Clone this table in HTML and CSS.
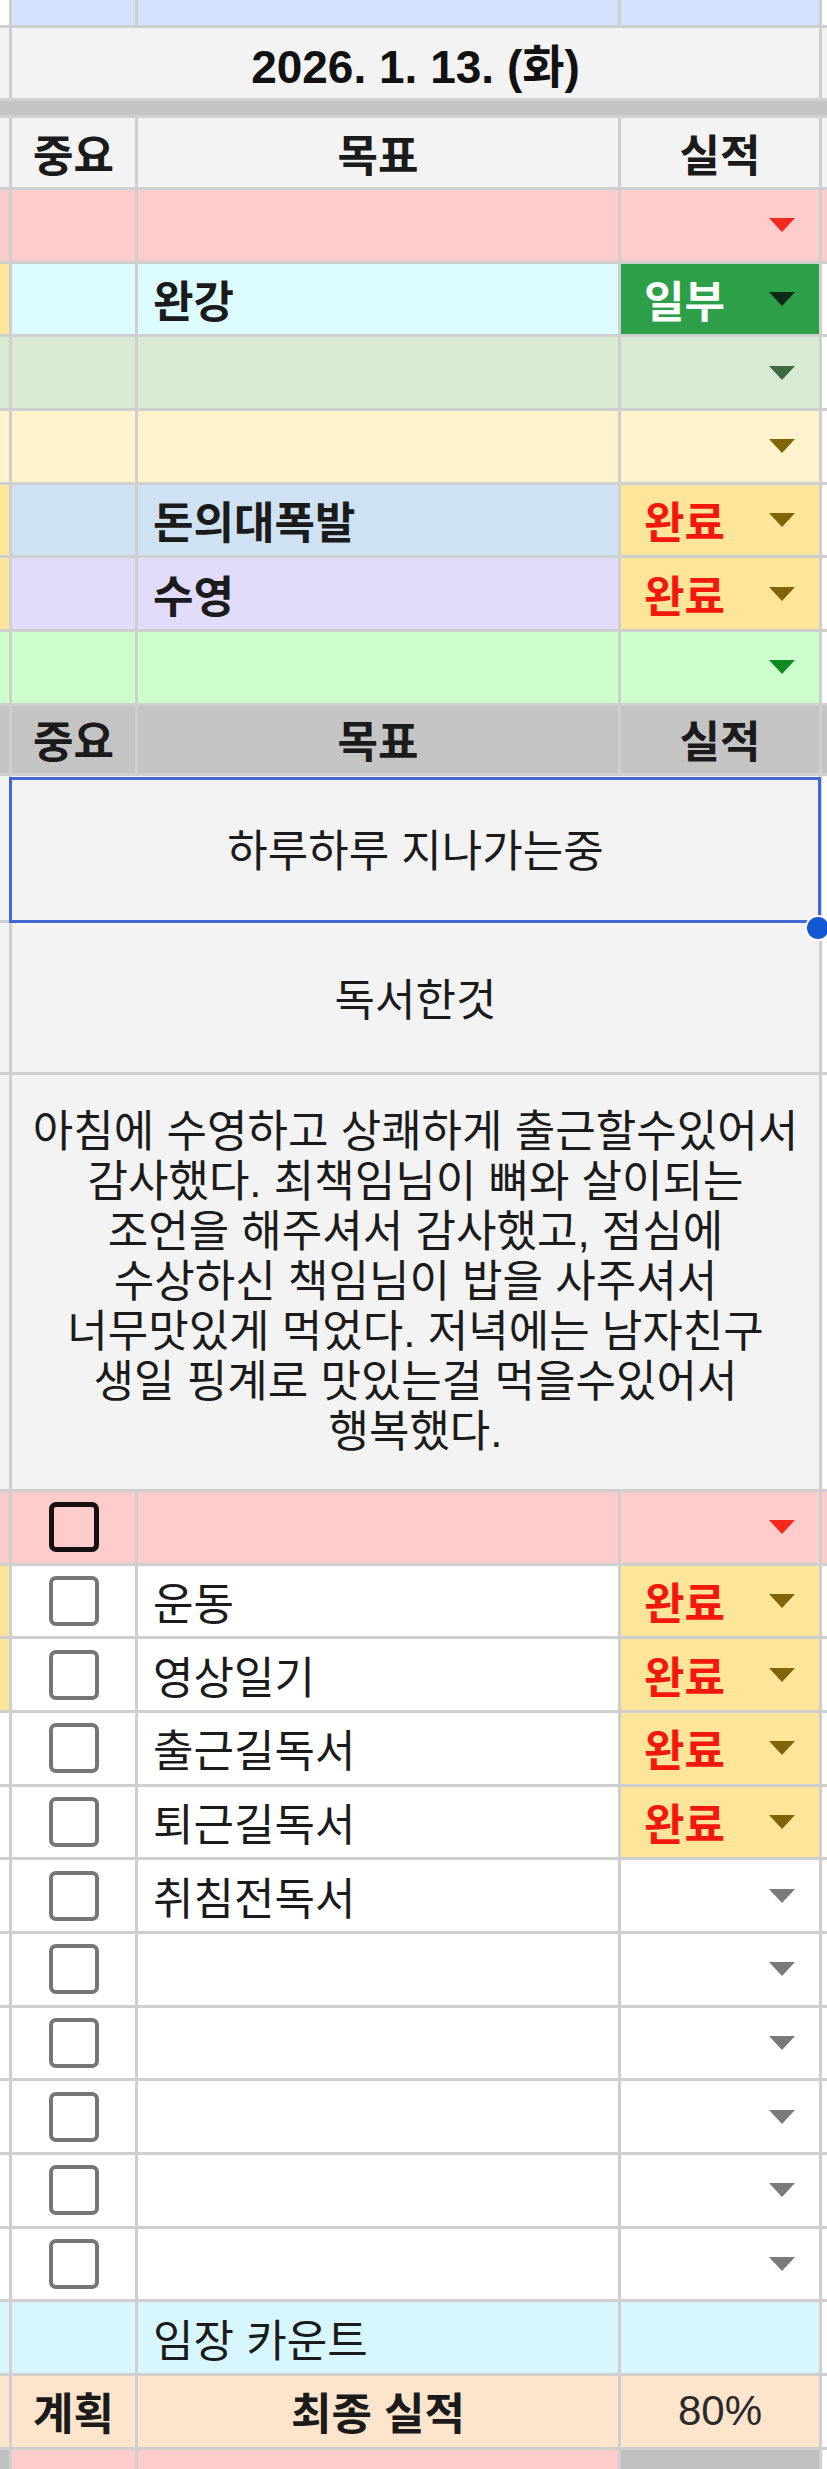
FILE: index.html
```html
<!DOCTYPE html>
<html lang="ko">
<head>
    <meta charset="UTF-8">
    <meta name="viewport" content="width=device-width, initial-scale=1.0">
    <title>2026. 1. 13. (화)</title>
    <link rel="stylesheet" href="styles.css">
</head>
<body>
<div class="sheet">

    <!-- previous day, cut off -->
    <div class="row row-top">
        <div class="edge"></div>
        <div></div>
        <div></div>
        <div></div>
        <div class="edge"></div>
    </div>

    <div class="row row-date">
        <div class="edge"></div>
        <div class="span date">2026. 1. 13. (화)</div>
        <div class="edge"></div>
    </div>

    <div class="row row-bar"><div class="full"></div></div>

    <div class="row row-head light">
        <div class="edge"></div>
        <div class="center bold">중요</div>
        <div class="center bold">목표</div>
        <div class="center bold">실적</div>
        <div class="edge"></div>
    </div>

    <!-- goals -->
    <div class="row pink">
        <div class="edge"></div>
        <div></div>
        <div class="name"></div>
        <div class="pick tri-red"><span></span><svg class="tri" viewBox="0 0 26 14"><path d="M0 0h26L13 14z"/></svg></div>
        <div class="edge"></div>
    </div>
    <div class="row cyan">
        <div class="edge gold"></div>
        <div></div>
        <div class="name bold">완강</div>
        <div class="pick green tri-dark"><span>일부</span><svg class="tri" viewBox="0 0 26 14"><path d="M0 0h26L13 14z"/></svg></div>
        <div class="edge white"></div>
    </div>
    <div class="row sage">
        <div class="edge"></div>
        <div></div>
        <div class="name"></div>
        <div class="pick tri-sage"><span></span><svg class="tri" viewBox="0 0 26 14"><path d="M0 0h26L13 14z"/></svg></div>
        <div class="edge white"></div>
    </div>
    <div class="row cream">
        <div class="edge"></div>
        <div></div>
        <div class="name"></div>
        <div class="pick tri-olive"><span></span><svg class="tri" viewBox="0 0 26 14"><path d="M0 0h26L13 14z"/></svg></div>
        <div class="edge white"></div>
    </div>
    <div class="row sky">
        <div class="edge gold"></div>
        <div></div>
        <div class="name bold">돈의대폭발</div>
        <div class="pick gold tri-olive"><span class="done">완료</span><svg class="tri" viewBox="0 0 26 14"><path d="M0 0h26L13 14z"/></svg></div>
        <div class="edge white"></div>
    </div>
    <div class="row lilac">
        <div class="edge gold"></div>
        <div></div>
        <div class="name bold">수영</div>
        <div class="pick gold tri-olive"><span class="done">완료</span><svg class="tri" viewBox="0 0 26 14"><path d="M0 0h26L13 14z"/></svg></div>
        <div class="edge white"></div>
    </div>
    <div class="row mint">
        <div class="edge"></div>
        <div></div>
        <div class="name"></div>
        <div class="pick tri-green"><span></span><svg class="tri" viewBox="0 0 26 14"><path d="M0 0h26L13 14z"/></svg></div>
        <div class="edge white"></div>
    </div>

    <div class="row row-head grey">
        <div class="edge"></div>
        <div class="center bold">중요</div>
        <div class="center bold">목표</div>
        <div class="center bold">실적</div>
        <div class="edge"></div>
    </div>

    <!-- notes -->
    <div class="row row-mood light">
        <div class="edge"></div>
        <div class="span center selected">하루하루 지나가는중</div>
        <div class="edge white"></div>
    </div>
    <div class="row row-read light">
        <div class="edge"></div>
        <div class="span center">독서한것</div>
        <div class="edge white"></div>
    </div>
    <div class="row row-diary light">
        <div class="edge"></div>
        <div class="span center diary">아침에 수영하고 상쾌하게 출근할수있어서<br>감사했다. 최책임님이 뼈와 살이되는<br>조언을 해주셔서 감사했고, 점심에<br>수상하신 책임님이 밥을 사주셔서<br>너무맛있게 먹었다. 저녁에는 남자친구<br>생일 핑계로 맛있는걸 먹을수있어서<br>행복했다.</div>
        <div class="edge white"></div>
    </div>

    <!-- routine -->
    <div class="row pink">
        <div class="edge"></div>
        <div class="center"><span class="box focus"></span></div>
        <div class="name"></div>
        <div class="pick tri-red"><span></span><svg class="tri" viewBox="0 0 26 14"><path d="M0 0h26L13 14z"/></svg></div>
        <div class="edge"></div>
    </div>
    <div class="row">
        <div class="edge gold"></div>
        <div class="center"><span class="box"></span></div>
        <div class="name">운동</div>
        <div class="pick gold tri-olive"><span class="done">완료</span><svg class="tri" viewBox="0 0 26 14"><path d="M0 0h26L13 14z"/></svg></div>
        <div class="edge"></div>
    </div>
    <div class="row">
        <div class="edge gold"></div>
        <div class="center"><span class="box"></span></div>
        <div class="name">영상일기</div>
        <div class="pick gold tri-olive"><span class="done">완료</span><svg class="tri" viewBox="0 0 26 14"><path d="M0 0h26L13 14z"/></svg></div>
        <div class="edge"></div>
    </div>
    <div class="row">
        <div class="edge"></div>
        <div class="center"><span class="box"></span></div>
        <div class="name">출근길독서</div>
        <div class="pick gold tri-olive"><span class="done">완료</span><svg class="tri" viewBox="0 0 26 14"><path d="M0 0h26L13 14z"/></svg></div>
        <div class="edge"></div>
    </div>
    <div class="row">
        <div class="edge"></div>
        <div class="center"><span class="box"></span></div>
        <div class="name">퇴근길독서</div>
        <div class="pick gold tri-olive"><span class="done">완료</span><svg class="tri" viewBox="0 0 26 14"><path d="M0 0h26L13 14z"/></svg></div>
        <div class="edge"></div>
    </div>
    <div class="row">
        <div class="edge"></div>
        <div class="center"><span class="box"></span></div>
        <div class="name">취침전독서</div>
        <div class="pick tri-grey"><span></span><svg class="tri" viewBox="0 0 26 14"><path d="M0 0h26L13 14z"/></svg></div>
        <div class="edge"></div>
    </div>
    <div class="row">
        <div class="edge"></div>
        <div class="center"><span class="box"></span></div>
        <div class="name"></div>
        <div class="pick tri-grey"><span></span><svg class="tri" viewBox="0 0 26 14"><path d="M0 0h26L13 14z"/></svg></div>
        <div class="edge"></div>
    </div>
    <div class="row">
        <div class="edge"></div>
        <div class="center"><span class="box"></span></div>
        <div class="name"></div>
        <div class="pick tri-grey"><span></span><svg class="tri" viewBox="0 0 26 14"><path d="M0 0h26L13 14z"/></svg></div>
        <div class="edge"></div>
    </div>
    <div class="row">
        <div class="edge"></div>
        <div class="center"><span class="box"></span></div>
        <div class="name"></div>
        <div class="pick tri-grey"><span></span><svg class="tri" viewBox="0 0 26 14"><path d="M0 0h26L13 14z"/></svg></div>
        <div class="edge"></div>
    </div>
    <div class="row">
        <div class="edge"></div>
        <div class="center"><span class="box"></span></div>
        <div class="name"></div>
        <div class="pick tri-grey"><span></span><svg class="tri" viewBox="0 0 26 14"><path d="M0 0h26L13 14z"/></svg></div>
        <div class="edge"></div>
    </div>
    <div class="row">
        <div class="edge"></div>
        <div class="center"><span class="box"></span></div>
        <div class="name"></div>
        <div class="pick tri-grey"><span></span><svg class="tri" viewBox="0 0 26 14"><path d="M0 0h26L13 14z"/></svg></div>
        <div class="edge"></div>
    </div>

    <div class="row ice">
        <div class="edge"></div>
        <div></div>
        <div class="name">임장 카운트</div>
        <div></div>
        <div class="edge white"></div>
    </div>

    <div class="row peach">
        <div class="edge"></div>
        <div class="center bold">계획</div>
        <div class="center bold">최종 실적</div>
        <div class="center pct">80%</div>
        <div class="edge white"></div>
    </div>

    <div class="row row-last pink">
        <div class="edge grey-cell"></div>
        <div></div>
        <div></div>
        <div class="grey-cell"></div>
        <div class="edge white"></div>
    </div>

</div>
</body>
</html>
```

FILE: styles.css
```css
* {
    box-sizing: border-box;
}

html,
body {
    margin: 0;
    height: 100%;
    overflow: hidden;
}

body {
    background: #fff;
    font-family: "Liberation Sans", "Noto Sans CJK KR", sans-serif;
    color: #1b1b1b;
}

.sheet {
    display: flex;
    flex-direction: column;
    gap: 3px;
    width: 827px;
    background: #cfcfcf;
}

.row {
    --bg: #fff;
    display: grid;
    grid-template-columns: 9px 123px 480px 198px 5px;
    column-gap: 3px;
    height: 70.7px;
    flex: none;
}

.row > div {
    display: flex;
    align-items: center;
    background: var(--bg);
    font-size: 44px;
    white-space: nowrap;
}

/* row heights */
.row-top { --bg: #d3e3fd; height: 25px; }
.row-date { --bg: #f3f3f3; height: 70px; }
.row-bar { height: 14px; grid-template-columns: 1fr; }
.row-bar .full { background: #c4c4c4; }
.row-head { height: 69px; }
.row-head.grey { height: 67px; }
.row-mood { height: 144px; }
.row-read { height: 149px; }
.row-diary { height: 414px; }
.row-last { height: 40px; }

.row-top > .edge { background: #fff; }

/* row colours */
.light { --bg: #f3f3f3; }
.grey { --bg: #c4c4c4; }
.pink { --bg: #ffcccc; }
.cyan { --bg: #dcfcff; }
.sage { --bg: #d9ead3; }
.cream { --bg: #fff2cc; }
.sky { --bg: #cfe2f3; }
.lilac { --bg: #e2dcfb; }
.mint { --bg: #ccffcc; }
.ice { --bg: #d7f6fd; }
.peach { --bg: #fde5cd; }

/* single cell colours */
.row > .gold { background: #ffe599; }
.row > .green { background: #2d9f48; color: #fff; }
.row > .white { background: #fff; }
.row > .grey-cell { background: #c0c0c0; }

.span {
    grid-column: 2 / 5;
}

.center {
    justify-content: center;
    text-align: center;
}

.bold {
    font-weight: 700;
}

.date {
    justify-content: center;
    font-size: 46px !important;
    font-weight: 700;
    color: #111;
}

.name {
    padding-left: 15px;
}

.pct {
    font-size: 42px !important;
    color: #2a2a2a;
}

.diary {
    line-height: 50px;
    white-space: normal !important;
}

/* status dropdown */
.pick {
    justify-content: space-between;
    padding: 0 24px 0 23px;
    font-weight: 700;
}

.done {
    color: #f3180e;
}

.tri {
    width: 26px;
    height: 14px;
    fill: currentColor;
    flex: none;
}

.tri-red .tri { fill: #f5281d; }
.tri-dark .tri { fill: #0d2a16; }
.tri-sage .tri { fill: #3a6b42; }
.tri-olive .tri { fill: #7f6508; }
.tri-green .tri { fill: #108a22; }
.tri-grey .tri { fill: #7a7a7a; }

/* checkbox */
.box {
    display: block;
    width: 50px;
    height: 50px;
    border: 4px solid #767676;
    border-radius: 7px;
}

.box.focus {
    border: 5px solid #171010;
}

/* selected cell */
.selected {
    position: relative;
}

.selected::before {
    content: "";
    position: absolute;
    top: 1px;
    left: -3px;
    right: -2px;
    bottom: -3px;
    border: 3px solid #4369d3;
    pointer-events: none;
}

.selected::after {
    content: "";
    position: absolute;
    right: -12px;
    bottom: -21px;
    width: 22px;
    height: 22px;
    border-radius: 50%;
    background: #1457d4;
    border: 2px solid #fff;
}
```
